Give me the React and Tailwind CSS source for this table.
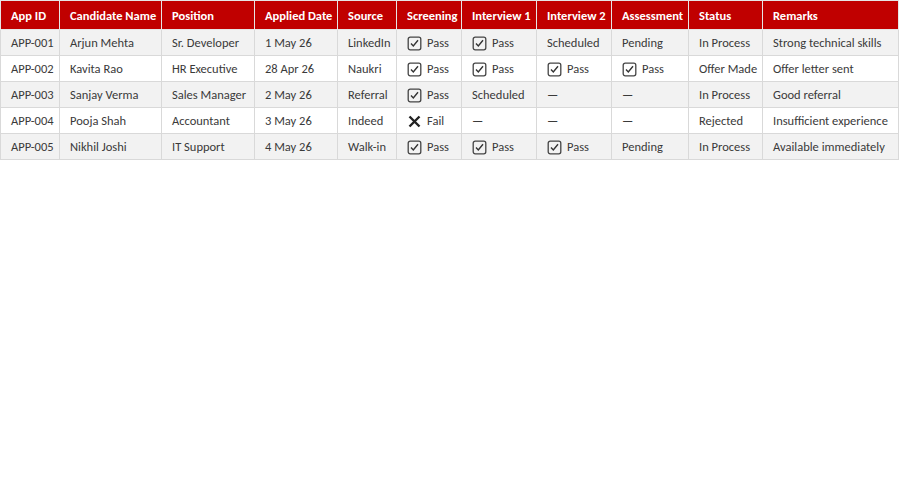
import React from "react";

const cols = [
  ["App ID", 59],
  ["Candidate Name", 102],
  ["Position", 93],
  ["Applied Date", 83],
  ["Source", 59],
  ["Screening", 65],
  ["Interview 1", 75],
  ["Interview 2", 75],
  ["Assessment", 77],
  ["Status", 74],
  ["Remarks", 136],
];

const P = "✓pass";
const F = "✗fail";
const rows = [
  ["APP-001", "Arjun Mehta", "Sr. Developer", "1 May 26", "LinkedIn", P, P, "Scheduled", "Pending", "In Process", "Strong technical skills"],
  ["APP-002", "Kavita Rao", "HR Executive", "28 Apr 26", "Naukri", P, P, P, P, "Offer Made", "Offer letter sent"],
  ["APP-003", "Sanjay Verma", "Sales Manager", "2 May 26", "Referral", P, "Scheduled", "—", "—", "In Process", "Good referral"],
  ["APP-004", "Pooja Shah", "Accountant", "3 May 26", "Indeed", F, "—", "—", "—", "Rejected", "Insufficient experience"],
  ["APP-005", "Nikhil Joshi", "IT Support", "4 May 26", "Walk-in", P, P, P, "Pending", "In Process", "Available immediately"],
];

function Check() {
  return (
    <svg width="15" height="15" viewBox="0 0 15 15" className="shrink-0">
      <rect x="1.2" y="1.2" width="12.6" height="12.6" rx="2" fill="none" stroke="#444" strokeWidth="1.3" />
      <path d="M4 7.6 L6.3 10 L11 4.3" fill="none" stroke="#333" strokeWidth="1.4" />
    </svg>
  );
}

function Cross() {
  return (
    <svg width="15" height="15" viewBox="0 0 15 15" className="shrink-0">
      <path d="M2.5 2.5 L12.5 12.5 M12.5 2.5 L2.5 12.5" stroke="#222" strokeWidth="2.4" />
    </svg>
  );
}

function Cell({ v }) {
  if (v === P)
    return (
      <span className="flex items-center gap-[5px]">
        <Check />
        <span>Pass</span>
      </span>
    );
  if (v === F)
    return (
      <span className="flex items-center gap-[5px]">
        <Cross />
        <span>Fail</span>
      </span>
    );
  return <span>{v}</span>;
}

export default function App() {
  return (
    <div
      className="w-[900px] h-[500px] bg-white"
      style={{ fontFamily: "Carlito, Calibri, Lato, 'Open Sans', sans-serif" }}
    >
      <table className="table-fixed border-collapse w-[899px] text-[12.5px] text-[#3a3a3a]">
        <colgroup>
          {cols.map(([n, w]) => (
            <col key={n} style={{ width: w }} />
          ))}
        </colgroup>
        <thead>
          <tr className="h-[29px] bg-[#c00000] text-white">
            {cols.map(([n]) => (
              <th
                key={n}
                className="border border-[#e6e6e6] text-left font-bold px-[10px] pt-[2px] whitespace-nowrap overflow-hidden"
              >
                {n}
              </th>
            ))}
          </tr>
        </thead>
        <tbody>
          {rows.map((r, i) => (
            <tr key={i} className={i % 2 === 0 ? "h-[26px] bg-[#f2f2f2]" : "h-[26px] bg-white"}>
              {r.map((v, j) => (
                <td
                  key={j}
                  className="border border-[#d9d9d9] px-[10px] pt-[2px] whitespace-nowrap overflow-hidden"
                >
                  <Cell v={v} />
                </td>
              ))}
            </tr>
          ))}
        </tbody>
      </table>
    </div>
  );
}
